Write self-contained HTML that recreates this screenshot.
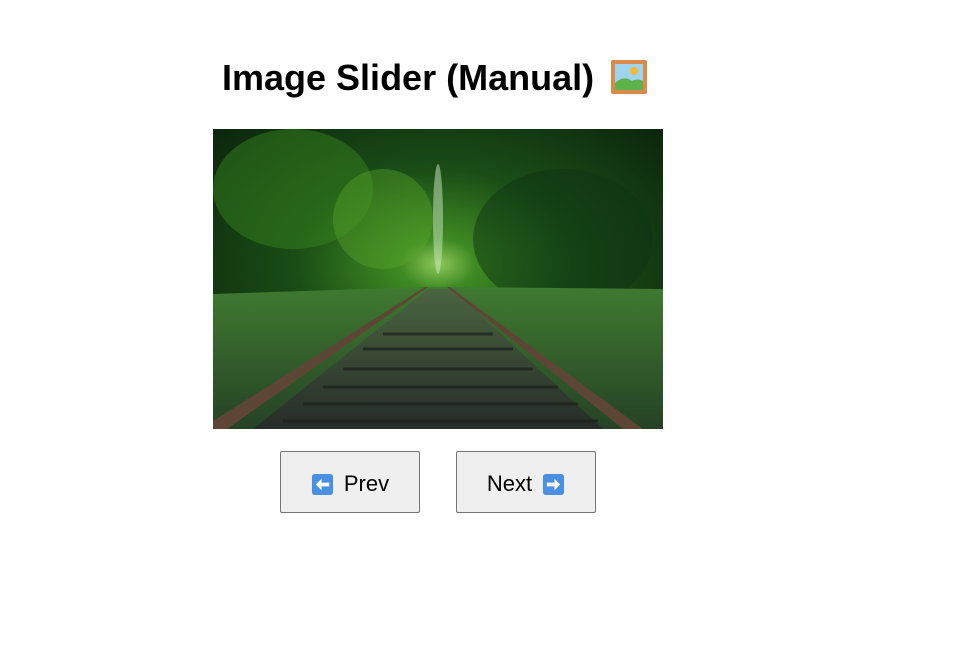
<!DOCTYPE html>
<html><head><style>
body{margin:0;background:#fff;width:953px;height:657px;position:relative;font-family:"Liberation Sans",Arial,sans-serif;overflow:hidden}
h1{position:absolute;left:222px;top:57px;margin:0;font-size:36px;font-weight:bold;color:#000;white-space:nowrap}
.img{position:absolute;left:213px;top:129px;width:450px;height:300px}
.btn{position:absolute;top:451px;width:138px;height:60px;border:1px solid #767676;border-radius:2px;background:#efefef;font-size:22px;color:#000;display:flex;align-items:center;justify-content:center;gap:10px;padding-top:4px;box-sizing:border-box;height:62px;width:140px}
.ic{width:23px;height:23px}
</style></head><body>
<h1>Image Slider (Manual)</h1>
<svg style="position:absolute;left:610px;top:59px" width="38" height="36" viewBox="0 0 38 36">
<rect x="1" y="1" width="36" height="34" rx="2" fill="#d98b4e"/>
<rect x="5" y="5" width="28" height="26" fill="#9fd4ee"/>
<circle cx="24" cy="12" r="4" fill="#f5b93a"/>
<path d="M5 24 Q14 16 22 22 Q28 19 33 22 V31 H5Z" fill="#5bb34a"/>
</svg>
<svg class="img" viewBox="0 0 450 300" preserveAspectRatio="none">
<defs>
<radialGradient id="g1" cx="0.5" cy="0.45" r="0.7"><stop offset="0" stop-color="#8fc85a"/><stop offset="0.12" stop-color="#3e8a22"/><stop offset="0.45" stop-color="#1a4d16"/><stop offset="1" stop-color="#0a220c"/></radialGradient>
<linearGradient id="g2" x1="0" y1="0" x2="0" y2="1"><stop offset="0" stop-color="#3f7a30"/><stop offset="1" stop-color="#254225"/></linearGradient>
<linearGradient id="g3" x1="0" y1="0" x2="0" y2="1"><stop offset="0" stop-color="#4a6440"/><stop offset="1" stop-color="#262c28"/></linearGradient>
</defs>
<rect width="450" height="300" fill="url(#g1)"/>
<ellipse cx="80" cy="60" rx="80" ry="60" fill="#3a8a1e" opacity=".45"/>
<ellipse cx="170" cy="90" rx="50" ry="50" fill="#5aa82a" opacity=".4"/>
<ellipse cx="350" cy="110" rx="90" ry="70" fill="#0e3414" opacity=".5"/>
<ellipse cx="225" cy="90" rx="5" ry="55" fill="#d0e8c8" opacity=".5"/>
<path d="M0 165 L215 158 L240 158 L450 160 L450 300 L0 300Z" fill="url(#g2)"/>
<path d="M215 160 L240 160 L390 300 L40 300Z" fill="url(#g3)"/>
<g stroke="#1a201c" stroke-width="3" opacity=".7">
<line x1="170" y1="205" x2="280" y2="205"/><line x1="150" y1="220" x2="300" y2="220"/><line x1="130" y1="240" x2="320" y2="240"/><line x1="110" y1="258" x2="345" y2="258"/><line x1="90" y1="275" x2="365" y2="275"/><line x1="70" y1="292" x2="385" y2="292"/>
</g>
<path d="M0 292 L212 158 L215 158 L14 300 L0 300Z" fill="#5e4636"/>
<path d="M234 158 L237 158 L430 300 L410 300Z" fill="#5e4636"/>
</svg>
<div class="btn" style="left:280px"><svg class="ic" viewBox="0 0 24 24"><rect x="1" y="1" width="22" height="22" rx="3" fill="#4a90e2"/><path d="M5 12 L11 6 V10 H19 V14 H11 V18Z" fill="#fff"/></svg>Prev</div>
<div class="btn" style="left:456px">Next<svg class="ic" viewBox="0 0 24 24"><rect x="1" y="1" width="22" height="22" rx="3" fill="#4a90e2"/><path d="M19 12 L13 6 V10 H5 V14 H13 V18Z" fill="#fff"/></svg></div>
</body></html>
